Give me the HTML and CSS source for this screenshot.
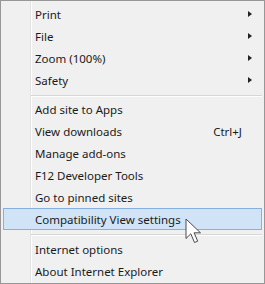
FILE: index.html
```html
<!DOCTYPE html>
<html lang="en">
<head>
    <meta charset="UTF-8">
    <title>Tools menu</title>
    <link rel="stylesheet" href="styles.css">
</head>
<body>
    <div class="menu">
        <ul class="group">
            <li class="item"><span class="label">Print</span><span class="arrow"></span></li>
            <li class="item"><span class="label">File</span><span class="arrow"></span></li>
            <li class="item"><span class="label">Zoom (100%)</span><span class="arrow"></span></li>
            <li class="item"><span class="label">Safety</span><span class="arrow"></span></li>
        </ul>
        <div class="sep sep-top"></div>
        <ul class="group">
            <li class="item"><span class="label">Add site to Apps</span></li>
            <li class="item"><span class="label">View downloads</span><span class="shortcut">Ctrl+J</span></li>
            <li class="item"><span class="label">Manage add-ons</span></li>
            <li class="item"><span class="label">F12 Developer Tools</span></li>
            <li class="item"><span class="label">Go to pinned sites</span></li>
            <li class="item hover"><span class="label">Compatibility View settings</span></li>
        </ul>
        <div class="sep"></div>
        <ul class="group">
            <li class="item"><span class="label">Internet options</span></li>
            <li class="item"><span class="label">About Internet Explorer</span></li>
        </ul>

        <!-- mouse pointer over the highlighted item -->
        <svg class="cursor" width="17" height="27" viewBox="0 0 17 27">
            <path d="M1 1 L1 20.5 L5.8 15.8 L9.5 24.5 L12.7 23.2 L9.1 14.8 L15.5 14.8 Z" fill="#fff" stroke="#4a4a4a" stroke-width="1" stroke-linejoin="round"/>
        </svg>
    </div>
</body>
</html>
```

FILE: styles.css
```css
body {
    margin: 0;
    font-family: "Noto Sans", "Open Sans", sans-serif;
    font-size: 11.5px;
    color: #1a1a1a;
}
.menu {
    position: relative;
    box-sizing: border-box;
    width: 265px;
    height: 284px;
    padding: 2px 2px 1px 2px;
    border: 1px solid #979797;
    background-color: #f0f0f0;
    background-image: linear-gradient(to right, transparent 29px, #e2e2e2 29px, #e2e2e2 30px, #fdfdfd 30px, #fdfdfd 31px, transparent 31px);
}
.group {
    list-style: none;
    margin: 0;
    padding: 0;
}
.item {
    display: flex;
    align-items: center;
    box-sizing: border-box;
    height: 22px;
    padding: 0 9px 0 31px;
    border: 1px solid transparent;
}
.item.hover {
    background-color: #d1e3f6;
    border-color: #86b0df;
}
.label {
    flex: 1;
    white-space: nowrap;
}
.shortcut {
    margin-right: 10px;
}
.arrow {
    width: 0;
    height: 0;
    border-top: 3.5px solid transparent;
    border-bottom: 3.5px solid transparent;
    border-left: 4px solid #222;
}
.sep {
    height: 8px;
    margin-left: 28px;
    background: linear-gradient(to bottom, transparent 4px, #d7d7d7 4px, #d7d7d7 5px, #fdfdfd 5px, #fdfdfd 6px, transparent 6px);
}
.sep-top {
    height: 7px;
}
.cursor {
    position: absolute;
    left: 184px;
    top: 217px;
}
```
